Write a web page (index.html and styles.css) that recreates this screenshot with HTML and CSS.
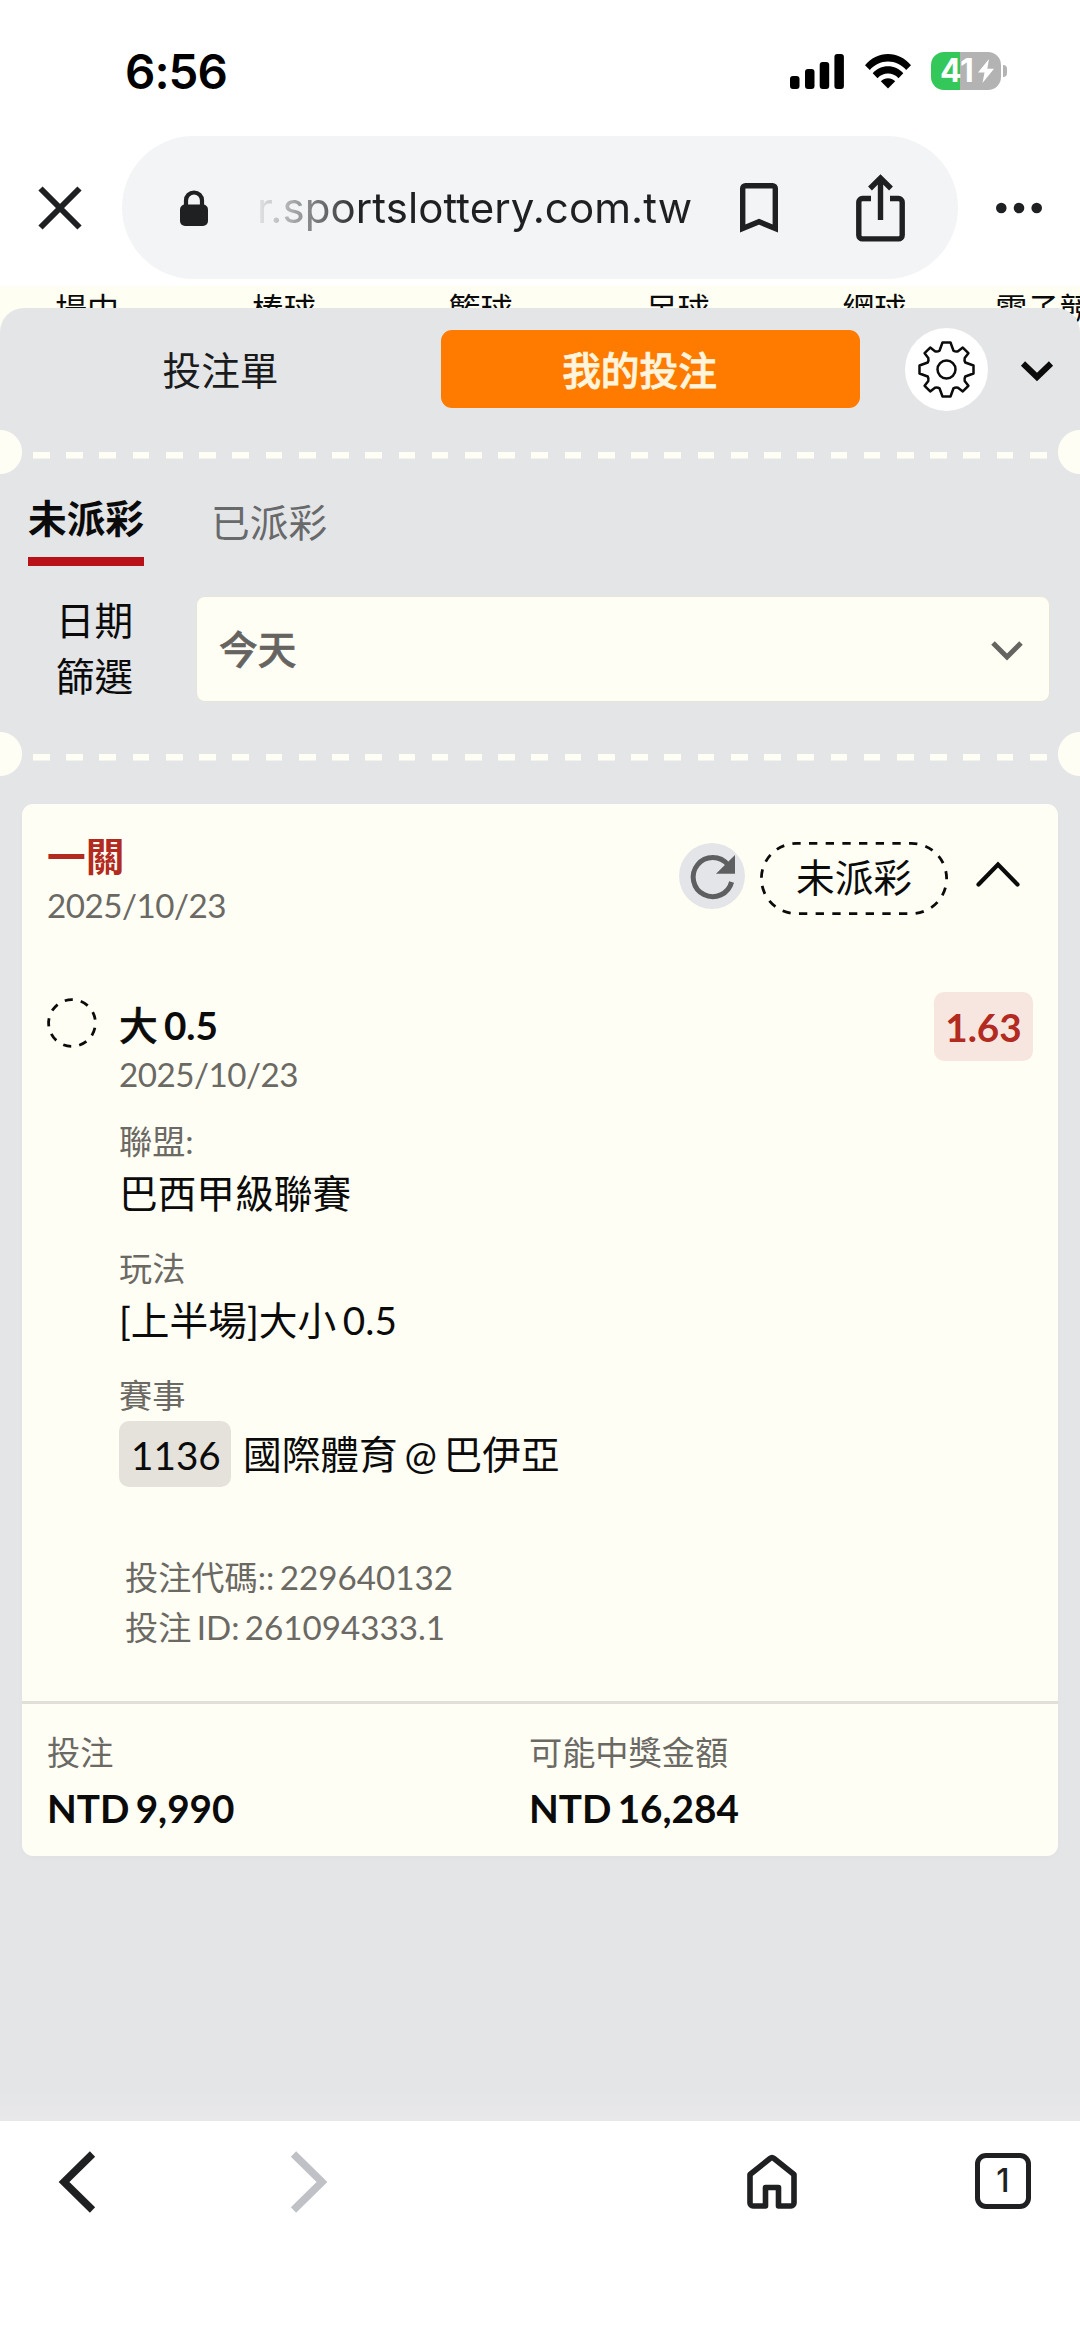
FILE: index.html
```html
<!DOCTYPE html>
<html lang="zh-Hant">
<head>
<meta charset="utf-8">
<title>我的投注</title>
<link rel="stylesheet" href="styles.css">
</head>
<body>
<div class="screen">
  <header class="status-bar">
    <span class="clock">6:56</span>
    <div class="status-icons">
      <svg class="signal" width="54" height="35" viewBox="0 0 54 35"><rect x="0" y="22" width="9.5" height="13" rx="3"/><rect x="15" y="15" width="9.5" height="20" rx="3"/><rect x="29.7" y="8" width="9.5" height="27" rx="3"/><rect x="44.4" y="0" width="9.5" height="35" rx="3"/></svg>
      <svg class="wifi" width="46" height="35" viewBox="0 0 46 35"><path d="M0 11.2C6 4 14 0 23 0s17 4 23 11.200l-4.800 4.900C36.500 10.800 30 7.600 23 7.600S9.500 10.800 4.800 16.100Z"/><path d="M7.700 19.300C12 14.600 17 12.300 23 12.300s11 2.300 15.300 7l-4.800 4.900C30.500 21.200 27 19.600 23 19.600s-7.500 1.600-10.500 4.600Z"/><path d="M15.800 27.300c4-4.200 10.400-4.200 14.400 0L23 34.600Z"/></svg>
      <div class="battery"><span class="battery-level">41</span><svg width="16" height="24" viewBox="0 0 16 24"><path d="M11 0 0 13.500h6.500L4.500 24 16 9.800H9.300Z" fill="#fff"/></svg></div>
      <span class="battery-tip"></span>
    </div>
  </header>

  <div class="address-row">
    <svg class="close" width="44" height="44" viewBox="0 0 44 44"><path d="M2.500 2.500 41.500 41.500M41.500 2.500 2.500 41.500"/></svg>
    <div class="address">
      <svg class="lock" width="28" height="36" viewBox="0 0 28 36"><rect x="0" y="14.500" width="28" height="21.500" rx="5"/><path d="M6 18V10.500a8 8 0 0 1 16 0V18" fill="none" stroke="#1f2022" stroke-width="4.200"/></svg>
      <span class="url">r.sportslottery.com.tw</span>
      <svg class="bookmark" width="38" height="50" viewBox="0 0 38 50"><path d="M2.700 45.500V5.500a2.800 2.800 0 0 1 2.800-2.800h27a2.800 2.800 0 0 1 2.800 2.800v40L19 38.700Z"/></svg>
      <svg class="share" width="49" height="68" viewBox="0 0 49 68"><path d="M15 24.500H6.500a3.700 3.700 0 0 0-3.700 3.700v33a3.700 3.700 0 0 0 3.700 3.700h36a3.700 3.700 0 0 0 3.700-3.700v-33a3.700 3.700 0 0 0-3.700-3.700H34M24.500 46V4M14 14.500 24.500 4 35 14.500"/></svg>
    </div>
    <svg class="more" width="46" height="12" viewBox="0 0 46 12"><circle cx="5.300" cy="6" r="5.300"/><circle cx="23" cy="6" r="5.300"/><circle cx="40.700" cy="6" r="5.300"/></svg>
  </div>

  <nav class="sports">
    <span>場中</span><span>棒球</span><span>籃球</span><span>足球</span><span>網球</span><span>電子競技</span>
  </nav>

  <main class="sheet">
    <div class="sheet-head">
      <button class="head-tab">投注單</button>
      <div class="head-slot"><button class="head-active">我的投注</button></div>
      <button class="gear"><svg width="57" height="57" viewBox="-28.500 -28.500 57 57"><g fill="none" stroke="#0b0b0b" stroke-width="2.500" stroke-linejoin="round"><circle r="9"/><path d="M-4 -27H4L7 -18.800Q9 -17.600 11.500 -18.200L16.300 -21.900L21.900 -16.300L18.200 -11.500Q17.600 -9 18.800 -7L27 -4V4L18.800 7Q17.600 9 18.200 11.500L21.900 16.300L16.300 21.900L11.500 18.200Q9 17.600 7 18.800L4 27H-4L-7 18.800Q-9 17.600 -11.500 18.200L-16.300 21.900L-21.900 16.300L-18.200 11.500Q-17.600 9 -18.800 7L-27 4V-4L-18.800 -7Q-17.600 -9 -18.200 -11.500L-21.900 -16.300L-16.300 -21.900L-11.500 -18.200Q-9 -17.600 -7 -18.800Z"/></g></svg></button>
      <svg class="collapse" width="32" height="20" viewBox="0 0 32 20"><path d="M2 2.500 16 16 30 2.500"/></svg>
    </div>
    <div class="perforation"></div>

    <div class="tabs">
      <span class="tab tab-on">未派彩</span>
      <span class="tab">已派彩</span>
    </div>
    <div class="filter">
      <div class="filter-label">日期<br>篩選</div>
      <div class="select"><span>今天</span><svg width="32" height="20" viewBox="0 0 32 20"><path d="M2 2 16 16 30 2"/></svg></div>
    </div>
    <div class="perforation"></div>

    <article class="card">
      <div class="card-head">
        <div>
          <div class="parlay">一關</div>
          <div class="date">2025/10/23</div>
        </div>
        <div class="card-actions">
          <span class="refresh"><svg width="46" height="46" viewBox="-2 -2 46 46"><path d="M37 10A19.500 19.500 0 1 0 40.600 27" fill="none" stroke="#5e5f61" stroke-width="5"/><path d="M44 0V18.700H25Z" fill="#5e5f61"/></svg></span>
          <span class="pending"><svg width="188" height="73" viewBox="0 0 188 73"><rect x="1.400" y="1.400" width="185.200" height="70.200" rx="35.100" pathLength="27" stroke-dasharray=".5 .5" stroke-dashoffset=".25"/></svg>未派彩</span>
          <svg class="fold" width="44" height="26" viewBox="0 0 44 26"><path d="M2.500 23.500 22 3.500 41.500 23.500"/></svg>
        </div>
      </div>

      <div class="leg">
        <svg class="leg-state" width="50" height="50" viewBox="0 0 50 50"><circle cx="25" cy="25" r="23.400" pathLength="9" stroke-dasharray=".5 .5" transform="rotate(-108 25 25)"/></svg>
        <div class="leg-body">
          <div class="pick"><span class="pick-side">大</span> 0.5</div>
          <div class="date leg-date">2025/10/23</div>
          <div class="field"><div class="label">聯盟:</div><div class="value">巴西甲級聯賽</div></div>
          <div class="field"><div class="label">玩法</div><div class="value">[上半場]大小 0.5</div></div>
          <div class="field"><div class="label">賽事</div><div class="match"><span class="match-no">1136</span><span>國際體育 @ 巴伊亞</span></div></div>
          <div class="codes"><div>投注代碼:: 229640132</div><div>投注 ID: 261094333.1</div></div>
        </div>
        <span class="odds">1.63</span>
      </div>

      <div class="totals">
        <div><div class="label">投注</div><div class="amount">NTD 9,990</div></div>
        <div><div class="label">可能中獎金額</div><div class="amount">NTD 16,284</div></div>
      </div>
    </article>
  </main>

  <footer class="toolbar">
    <svg class="back" width="37" height="62" viewBox="0 0 37 62"><path d="M33.500 3 5 31 33.500 59"/></svg>
    <svg class="forward" width="37" height="62" viewBox="0 0 37 62"><path d="M3.500 3 32 31 3.500 59"/></svg>
    <svg class="home" width="50" height="54" viewBox="0 0 50 54"><path d="M3 19.500 23 3.500a3.200 3.200 0 0 1 4 0L47 19.500V48a3 3 0 0 1-3 3H31.500V32.500h-13V51H6a3 3 0 0 1-3-3Z"/></svg>
    <span class="tab-count">1</span>
  </footer>
</div>
</body>
</html>
```

FILE: styles.css
```css
* { box-sizing: border-box; }
body { margin: 0; background: #fff; }
svg { display: block; flex: none; overflow: visible; }
button { border: 0; padding: 0; background: none; font: inherit; color: inherit; }

.screen {
  width: 1080px;
  height: 2337px;
  display: flex;
  flex-direction: column;
  overflow: hidden;
  font-family: Lato, "Noto Sans CJK TC", sans-serif;
  font-size: 38.7px;
  word-spacing: -3.2px;
  color: #0b0b0b;
}

/* Status bar */
.status-bar {
  height: 136px;
  padding: 0 73px 0 125px;
  display: flex;
  justify-content: space-between;
  font-family: Inter, sans-serif;
}
.clock { margin-top: 42px; line-height: 60px; font-size: 47.500px; font-weight: 600; color: #000; letter-spacing: -1px; }
.status-icons { height: 38px; margin-top: 52px; display: flex; align-items: center; }
.wifi { margin: 0 20px 0 21px; }
.battery {
  width: 70px;
  height: 38px;
  border-radius: 13px;
  background: linear-gradient(90deg, #34c759 29px, #b3b3b3 29px);
  display: flex;
  align-items: center;
  padding-left: 9px;
  gap: 2px;
}
.battery-level { width: 36px; color: #fff; font-size: 32px; font-weight: 700; line-height: 38px; letter-spacing: -0.5px; }
.battery-tip { width: 4px; height: 12px; margin-left: 2px; border-radius: 0 5px 5px 0; background: #b3b3b3; }

/* Address bar */
.address-row { height: 150px; display: flex; align-items: flex-start; padding-left: 38px; }
.close { margin-top: 50px; fill: none; stroke: #1f2022; stroke-width: 6; }
.address {
  width: 836px;
  height: 143px;
  margin-left: 40px;
  padding-left: 58px;
  border-radius: 72px;
  background: #f3f4f6;
  display: flex;
  align-items: center;
  fill: #1f2022;
}
.url {
  width: 434px;
  margin-left: 49px;
  font: 42px/60px Inter, sans-serif;
  letter-spacing: .08px;
  color: #1f2022;
  white-space: nowrap;
  -webkit-mask-image: linear-gradient(90deg, transparent -10px, rgba(0,0,0,.3) 30px, #000 105px);
  mask-image: linear-gradient(90deg, transparent -10px, rgba(0,0,0,.3) 30px, #000 105px);
}
.bookmark, .share { fill: none; stroke: #1f2022; stroke-width: 5.4; }
.bookmark { margin-left: 49px; }
.share { margin-left: 78px; }
.more { margin: 66px 0 0 38px; fill: #1f2022; }

/* Sport categories, partly covered by the sheet */
.sports {
  height: 46px;
  margin-bottom: -24px;
  padding-left: 55px;
  display: flex;
  background: #fffef3;
  font-size: 32px;
  line-height: 46px;
  overflow: hidden;
  white-space: nowrap;
}
.sports span { flex: none; width: 196.800px; }
.sports span:nth-child(5) { width: 153px; }

/* Bet sheet */
.sheet {
  position: relative;
  flex: none;
  height: 1813px;
  border-radius: 24px 24px 0 0;
  background: linear-gradient(#e4e5e7 1780px, #e8e8ea);
}
.sheet-head { height: 122px; display: flex; align-items: center; }
.head-tab { width: 441px; padding-bottom: 3px; color: #1a1b1d; }
.head-slot { width: 419px; }
.head-active {
  width: 419px;
  height: 78px;
  padding: 0 22px 3px 0;
  border-radius: 11px;
  background: #ff7b00;
  color: #fff4dc;
  font-weight: 500;
  -webkit-text-stroke: .8px;
}
.gear {
  width: 83px;
  height: 83px;
  margin-left: 45px;
  border-radius: 50%;
  background: #fff;
  display: grid;
  place-items: center;
}
.collapse { margin: 3px 0 0 33px; fill: none; stroke: #0b0b0b; stroke-width: 6; }

.perforation {
  height: 44px;
  background:
    radial-gradient(circle at 0 22px, #fffef5 21.500px, transparent 22.500px),
    radial-gradient(circle at 100% 22px, #fffef5 21.500px, transparent 22.500px),
    repeating-linear-gradient(90deg, #fffef5 0 16.700px, transparent 16.700px 33.230px) 33px 22px / 1014px 6.500px no-repeat;
}

.tabs { height: 92px; padding-left: 28px; display: flex; gap: 67px; color: #68696b; }
.tab { line-height: 60px; padding-top: 18px; }
.tab-on { height: 92px; padding-top: 14px; border-bottom: 9px solid #b81118; color: #0b0b0b; font-weight: 700; }

.filter { display: flex; align-items: flex-start; height: 166px; padding-top: 30px; }
.filter-label { width: 196px; padding-right: 7px; text-align: center; line-height: 55.500px; margin-top: -3px; }
.select {
  width: 854px;
  height: 106px;
  padding: 0 26px 0 22px;
  border: 1px solid #e8e4da;
  border-radius: 9px;
  background: #fffef5;
  display: flex;
  align-items: center;
  justify-content: space-between;
  color: #666460;
  font-weight: 500;
}
.select span { padding-bottom: 4px; -webkit-text-stroke: .7px; }
.select svg { fill: none; stroke: #666460; stroke-width: 5; margin-top: 4px; }

/* Ticket card */
.card {
  height: 1052px;
  margin: 28px 22px 0;
  border-radius: 11px;
  background: #fffef5;
  box-shadow: 0 2px 6px rgba(0, 0, 0, .02);
}
.card-head { height: 189px; padding: 27px 38px 0 25px; display: flex; justify-content: space-between; align-items: flex-start; }
.parlay { line-height: 50px; font-weight: 700; color: #b22a20; }
.date { font-size: 33.200px; line-height: 48px; color: #6b6963; letter-spacing: -.5px; }
.card-actions { display: flex; align-items: center; height: 73px; margin-top: 11px; }
.refresh { width: 66px; height: 66px; margin-bottom: 6px; border-radius: 50%; background: #e4e5e8; display: grid; place-items: center; }
.pending { position: relative; width: 188px; height: 73px; margin-left: 15px; line-height: 70px; text-align: center; }
.pending svg { position: absolute; inset: 0; fill: none; stroke: #0b0b0b; stroke-width: 2.800; }
.fold { margin: 0 0 9px 28px; fill: none; stroke: #0b0b0b; stroke-width: 4.200; stroke-linecap: round; }

.leg { height: 708px; padding: 5px 25px 0; display: flex; align-items: flex-start; }
.leg-state { fill: none; stroke: #0b0b0b; stroke-width: 2.800; }
.leg-body { flex: 1; padding-left: 22px; }
.pick { font-weight: 700; line-height: 54px; }
.pick-side { font-weight: 500; -webkit-text-stroke: .6px; }
.leg-date { line-height: 45px; padding-bottom: 1px; }
.label { font-size: 33.200px; line-height: 48px; color: #6b6963; }
.value { line-height: 56px; }
.field { margin-top: 23px; }
.leg-date + .field { margin-top: 19px; }
.match { display: flex; align-items: center; gap: 12px; margin-top: 2px; line-height: 66px; }
.match-no { width: 112px; height: 66px; line-height: 69px; padding-left: 12px; border-radius: 10px; background: #e5e2dc; }
.codes { margin-top: 65px; padding-left: 6px; font-size: 33.200px; line-height: 50px; color: #6b6963; }
.odds {
  width: 99px;
  height: 69px;
  margin: -6px 0 0;
  border-radius: 10px;
  background: #f7e6e0;
  color: #b22a20;
  font-weight: 700;
  line-height: 71px;
  text-align: center;
}

.totals { height: 155px; padding: 24px 25px 0; border-top: 3px solid #e2dfd8; display: grid; grid-template-columns: 482px 1fr; }
.amount { margin-top: 4px; line-height: 56px; font-weight: 700; }

/* Browser toolbar */
.toolbar { flex: 1; padding: 30px 0 0 59px; display: flex; align-items: flex-start; background: #fff; }
.toolbar svg { fill: none; stroke: #1f2022; stroke-width: 7.500; }
.toolbar .forward { margin-left: 194px; stroke: #bfc1c6; }
.toolbar .home { margin: 4px 0 0 420px; stroke-width: 5.600; stroke-linejoin: round; }
.tab-count {
  width: 56px;
  height: 56px;
  margin: 2px 0 0 178px;
  border: 5.500px solid #1f2022;
  border-radius: 11px;
  font: 500 32px/46px Inter, sans-serif;
  text-align: center;
  color: #1f2022;
}
```
